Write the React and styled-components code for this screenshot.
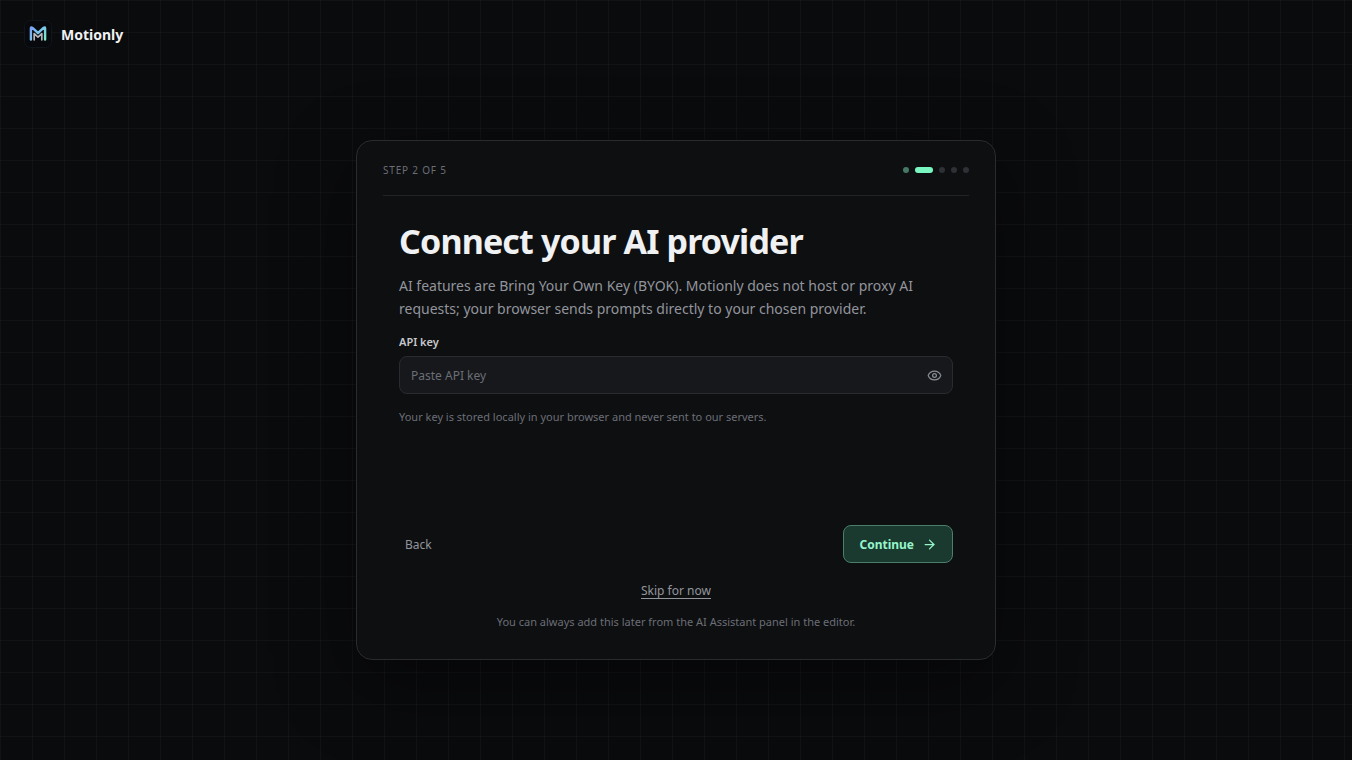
import React, { useState } from "react";
import styled, { createGlobalStyle } from "styled-components";
import { ArrowRight, Eye, EyeOff } from "lucide-react";

const STEPS = 5;
const CURRENT_STEP = 2;

const Logo = () => (
  <LogoMark viewBox="0 0 28 28" fill="none" aria-hidden="true">
    <defs>
      <linearGradient id="markOuter" x1="6" y1="8" x2="22" y2="22" gradientUnits="userSpaceOnUse">
        <stop offset="0" stopColor="#7aa2f7" />
        <stop offset="0.5" stopColor="#7cc8e8" />
        <stop offset="1" stopColor="#7af7c0" />
      </linearGradient>
    </defs>
    <rect x="0.5" y="0.5" width="27" height="27" rx="6" fill="#07090d" stroke="#10161c" />
    <path
      d="M6.9 19.6V8.6Q6.9 6.6 8.5 7.9L14 13L19.5 7.9Q21.1 6.6 21.1 8.6V19.6"
      stroke="url(#markOuter)"
      strokeWidth="2.4"
      strokeLinecap="round"
      strokeLinejoin="round"
    />
    <path
      d="M10.2 19.8V13.6L14 17.2L17.8 13.6V19.8"
      stroke="#b4b8be"
      strokeWidth="1.7"
      strokeLinecap="round"
      strokeLinejoin="round"
    />
  </LogoMark>
);

const App = () => {
  const [apiKey, setApiKey] = useState("");
  const [visible, setVisible] = useState(false);

  return (
    <>
      <GlobalStyle />
      <Page>
        <TopBar>
          <Logo />
          <BrandName>Motionly</BrandName>
        </TopBar>
        <Main>
          <Card>
            <CardHeader>
              <StepLabel>Step {CURRENT_STEP} of {STEPS}</StepLabel>
              <Dots>
                {Array.from({ length: STEPS }, (_, i) => (
                  <Dot key={i} $active={i + 1 === CURRENT_STEP} $done={i + 1 < CURRENT_STEP} />
                ))}
              </Dots>
            </CardHeader>
            <Form onSubmit={(e) => e.preventDefault()}>
              <Title>Connect your AI provider</Title>
              <Lead>
                AI features are Bring Your Own Key (BYOK). Motionly does not host or proxy AI
                requests; your browser sends prompts directly to your chosen provider.
              </Lead>
              <Label htmlFor="api-key">API key</Label>
              <Field>
                <Input
                  id="api-key"
                  type={visible ? "text" : "password"}
                  placeholder="Paste API key"
                  autoComplete="off"
                  value={apiKey}
                  onChange={(e) => setApiKey(e.target.value)}
                />
                <IconButton
                  type="button"
                  aria-label={visible ? "Hide API key" : "Show API key"}
                  onClick={() => setVisible(!visible)}
                >
                  {visible ? <EyeOff size={15} /> : <Eye size={15} />}
                </IconButton>
              </Field>
              <Hint>Your key is stored locally in your browser and never sent to our servers.</Hint>
              <Actions>
                <BackButton type="button">Back</BackButton>
                <ContinueButton type="submit">
                  Continue
                  <ArrowRight size={15} />
                </ContinueButton>
              </Actions>
              <SkipButton type="button">Skip for now</SkipButton>
              <Footnote>You can always add this later from the AI Assistant panel in the editor.</Footnote>
            </Form>
          </Card>
        </Main>
      </Page>
    </>
  );
};

export default App;

const GlobalStyle = createGlobalStyle`
  * {
    box-sizing: border-box;
  }

  body {
    margin: 0;
    background: #0a0b0d;
    font-family: "Noto Sans", sans-serif;
    color: #f0f1f3;
  }

  button, input {
    font-family: inherit;
  }

  button {
    cursor: pointer;
  }
`;

// page

const Page = styled.div`
  display: flex;
  flex-direction: column;
  min-height: 100vh;
  background-color: #0a0b0d;
  background-image:
    linear-gradient(to right, rgba(255, 255, 255, 0.03) 1px, transparent 1px),
    linear-gradient(to bottom, rgba(255, 255, 255, 0.03) 1px, transparent 1px);
  background-size: 32px 32px;
`;

const TopBar = styled.header`
  display: flex;
  align-items: center;
  gap: 9px;
  padding: 20px 24px;
`;

const LogoMark = styled.svg`
  width: 28px;
  height: 28px;
`;

const BrandName = styled.span`
  font-size: 14px;
  line-height: 21px;
  font-weight: 700;
`;

const Main = styled.main`
  flex: 1;
  display: flex;
  align-items: center;
  justify-content: center;
  padding: 0 24px 28px;
`;

// card

const Card = styled.section`
  display: flex;
  flex-direction: column;
  width: 100%;
  max-width: 640px;
  min-height: 520px;
  padding: 18px 26px 29px;
  border: 1px solid #292b2f;
  border-radius: 16px;
  background: #0e0f11;
  box-shadow: 0 24px 80px rgba(0, 0, 0, 0.45);
`;

const CardHeader = styled.div`
  display: flex;
  align-items: center;
  justify-content: space-between;
  padding: 3px 0 17px;
  border-bottom: 1px solid #212327;
`;

const StepLabel = styled.span`
  font-size: 10px;
  line-height: 16px;
  letter-spacing: 0.08em;
  text-transform: uppercase;
  color: #6b6e76;
`;

const Dots = styled.div`
  display: flex;
  gap: 6px;
`;

const Dot = styled.span`
  width: ${({ $active }) => ($active ? "18px" : "6px")};
  height: 6px;
  border-radius: 3px;
  background: ${({ $active, $done }) => ($active ? "#7af7c0" : $done ? "#467965" : "#2e3035")};
`;

// form

const Form = styled.form`
  flex: 1;
  display: flex;
  flex-direction: column;
  padding: 24px 16px 0;
`;

const Title = styled.h1`
  margin: 0;
  font-size: 34px;
  line-height: 42px;
  font-weight: 700;
  letter-spacing: -0.025em;
`;

const Lead = styled.p`
  margin: 12px 0 0;
  font-size: 14px;
  line-height: 23px;
  color: #92959c;
`;

const Label = styled.label`
  margin-top: 14px;
  font-size: 11px;
  line-height: 16px;
  font-weight: 600;
  color: #c6c8cc;
`;

const Field = styled.div`
  display: flex;
  align-items: center;
  height: 38px;
  margin-top: 6px;
  border: 1px solid #292b2f;
  border-radius: 8px;
  background: #16181b;
`;

const Input = styled.input`
  flex: 1;
  min-width: 0;
  height: 100%;
  padding: 0 11px;
  border: 0;
  outline: 0;
  background: transparent;
  font-size: 12px;
  color: #f0f1f3;

  &::placeholder {
    color: #6b6e76;
  }
`;

const IconButton = styled.button`
  display: flex;
  padding: 6px 10px;
  border: 0;
  background: transparent;
  color: #8a8d94;
`;

const Hint = styled.p`
  margin: 15px 0 0;
  font-size: 11px;
  line-height: 16px;
  color: #6b6e76;
`;

const Actions = styled.div`
  display: flex;
  align-items: center;
  justify-content: space-between;
  margin-top: auto;
`;

const BackButton = styled.button`
  padding: 8px 6px;
  border: 0;
  background: transparent;
  font-size: 12px;
  color: #92959c;
`;

const ContinueButton = styled.button`
  display: flex;
  align-items: center;
  gap: 8px;
  height: 38px;
  padding: 0 15px;
  border: 1px solid #4a7f6b;
  border-radius: 8px;
  background: #1a3a2f;
  font-size: 12px;
  font-weight: 700;
  color: #96f5cb;
`;

const SkipButton = styled.button`
  align-self: center;
  margin-top: 21px;
  padding: 0;
  border: 0;
  border-bottom: 1px solid #92959c;
  background: transparent;
  font-size: 12px;
  line-height: 14px;
  color: #92959c;
`;

const Footnote = styled.p`
  margin: 15px 0 0;
  font-size: 11px;
  line-height: 16px;
  text-align: center;
  color: #6b6e76;
`;
